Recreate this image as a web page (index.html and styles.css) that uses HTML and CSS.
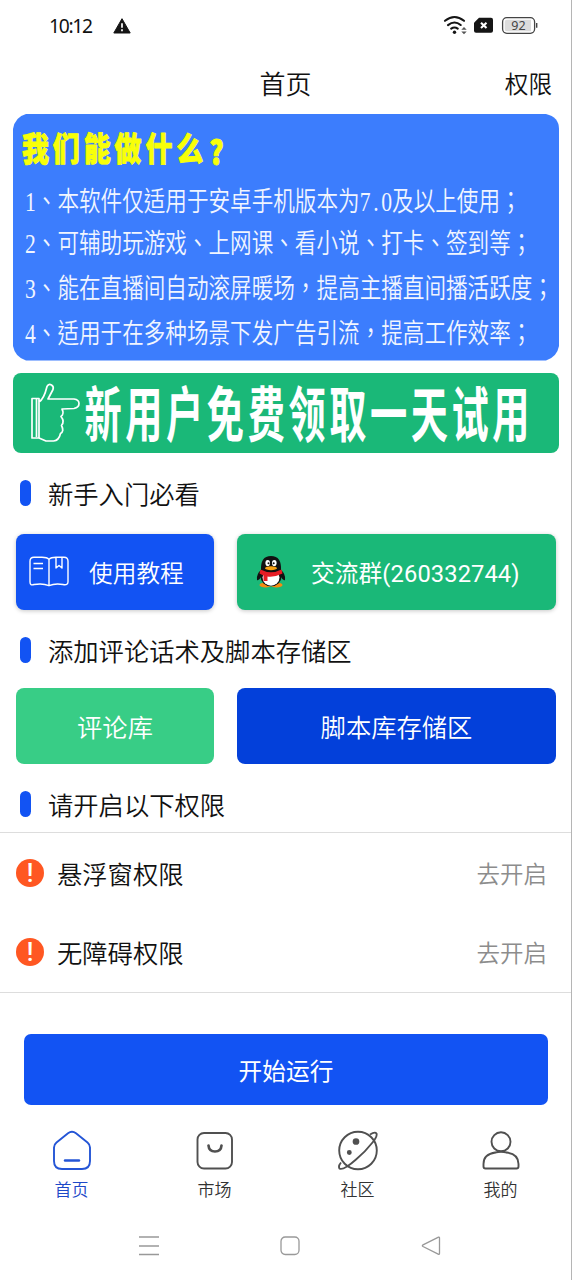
FILE: index.html
```html
<!DOCTYPE html>
<html lang="zh-CN">
<head>
<meta charset="utf-8">
<title>首页</title>
<link rel="stylesheet" href="styles.css">
</head>
<body>
<div class="screen">
  <header class="status">
    <span class="clock">10:12</span>
    <svg class="warn" width="18" height="16" viewBox="0 0 18 16"><path d="M9 .7 17.2 15H.8z" fill="#151515" stroke="#151515" stroke-linejoin="round"/><path d="M9 5.2v4.6M9 11.3v2" stroke="#fff" stroke-width="1.7"/></svg>
    <svg class="signals" width="96" height="22" viewBox="442 14 96 22">
      <g fill="none" stroke="#151515" stroke-width="2.1" stroke-linecap="round"><path d="M445 20.8q9.500-7.600 19 0M448 25.100q6.500-5.200 12.700-.1M451.200 28.700q3.300-2.400 6.500 0"/></g>
      <circle cx="454.500" cy="32.200" r="1.700" fill="#151515"/>
      <path d="M461.300 29.800l2.700-2.800 2.700 2.800zM461.300 31.400h5.400l-2.700 2.800z" fill="#555"/>
      <path d="M479 17.800h12q2 0 2 2v11q0 2-2 2h-15q-2 0-2-2v-8z" fill="#151515"/>
      <path d="M481 22.700l5.500 5.200m0-5.200-5.500 5.200" stroke="#fff" stroke-width="2.1"/>
      <rect x="502.600" y="17.700" width="32" height="15.600" rx="4.200" fill="#fff" stroke="#444" stroke-width="1.300"/>
      <path d="M507 19.700h24v11.600h-24q-2.300 0-2.300-2.300v-7q0-2.300 2.300-2.300z" fill="#dcdcdc"/>
      <path d="M536.700 23v4.700" stroke="#444" stroke-width="1.400"/>
      <text class="battery" x="518.500" y="30.300" text-anchor="middle">92</text>
    </svg>
  </header>

  <div class="titlebar"><span></span><h1>首页</h1><a class="perm-link">权限</a></div>

  <main>
    <svg class="intro" width="546" height="247" viewBox="13 114 546 247">
      <path d="M26 114H546Q559 117 559 129V346Q557 357 546 360.500H26Q15 357 13 346V129Q15 117 26 114z" fill="#3c7dfd"/>
      <text class="intro-title" transform="translate(22 160.500) scale(.9 1.100)">我们能做什么<tspan x="208" y="4">?</tspan></text>
      <g class="intro-lines" lang="zh-TW">
        <text transform="translate(25 211) scale(.8 1)">1、本软件仅适用于安卓手机版本为7<tspan dx="3.400">.</tspan><tspan dx="3.400">0</tspan>及以上使用；</text>
        <text transform="translate(25 252.500) scale(.8 1)">2、可辅助玩游戏、上网课、看小说、打卡、签到等；</text>
        <text transform="translate(25 298) scale(.8 1)">3、能在直播间自动滚屏暖场，提高主播直间播活跃度；</text>
        <text transform="translate(25 342.500) scale(.8 1)">4、适用于在多种场景下发广告引流，提高工作效率；</text>
      </g>
    </svg>

    <svg class="trial" width="546" height="80" viewBox="13 373 546 80">
      <rect x="13" y="373" width="546" height="80" rx="8" fill="#1ab878"/>
      <path d="M32 398.500h7v39.500h-7zM36.500 399v38M39 402q5-3 8-15.500 1.500-3 4.500-1.500 2.500 1.500 1.500 4.500l-5 9.500h26q5 .5 5 4.500t-5 5l-12 .5q2.500 5-1 7.500 4 5 .5 9 3 6-1 8-1.500 7-7 7.500H46l-7-3" fill="none" stroke="#fff" stroke-width="1.700" stroke-linejoin="round"/>
      <text class="trial-text" transform="translate(84.500 436.500) scale(.62 1)">新用户免费领取一天试用</text>
    </svg>

    <h2>新手入门必看</h2>
    <div class="row">
      <button class="btn blue tutorial">
        <svg width="40" height="32" viewBox="0 0 40 32" fill="none" stroke="#fff" stroke-width="1.400" stroke-linejoin="round"><path d="M20 3.500Q18 1.300 13 1.300H5q-4 0-4 4V26q0 4 4 2.500 9-1.500 15 1.200 6-2.700 14-1.200 5 1 5-2.500V5.300q0-4-4-4h-8q-5 0-7 2.200zM20 3.500v26M4.500 7.500H14M4.500 12.500H14M27 1.500v10.500l3-2.500 3 2.500V1.500"/></svg>
        <span>使用教程</span>
      </button>
      <button class="btn green group">
        <svg width="30" height="34" viewBox="0 0 30 34">
          <path d="M6 14Q0 19 1 25q2 1 4-3M24 14q6 5 5 11-2 1-4-3" fill="#111"/>
          <ellipse cx="9.500" cy="30" rx="6" ry="2.400" fill="#f58b12"/><ellipse cx="20.500" cy="30" rx="6" ry="2.400" fill="#f58b12"/>
          <ellipse cx="15" cy="21.500" rx="10.500" ry="9.800" fill="#111"/><ellipse cx="15" cy="22.500" rx="8.500" ry="8.300" fill="#fff"/>
          <path d="M5 16Q4 1 15 1t10 15q-10 6-20 0z" fill="#111"/>
          <ellipse cx="11.700" cy="8" rx="2.300" ry="3.100" fill="#fff"/><ellipse cx="18.300" cy="8" rx="2.300" ry="3.100" fill="#fff"/>
          <circle cx="12.500" cy="8.200" r="1" fill="#111"/><circle cx="17.700" cy="8.200" r="1" fill="#111"/>
          <ellipse cx="15" cy="13.200" rx="6" ry="2" fill="#f9a112"/>
          <path d="M4.500 14.500q10.500 5.500 21 0l1 4q-8 4-15 3v4.500H7.500v-5.500l-4-2z" fill="#e71d25"/>
        </svg>
        <span>交流群(260332744)</span>
      </button>
    </div>

    <h2>添加评论话术及脚本存储区</h2>
    <div class="row">
      <button class="btn mint">评论库</button>
      <button class="btn royal">脚本库存储区</button>
    </div>

    <h2>请开启以下权限</h2>
    <div class="perms">
      <div class="perm"><i>!</i><span class="perm-name">悬浮窗权限</span><a>去开启</a></div>
      <div class="perm"><i>!</i><span class="perm-name">无障碍权限</span><a>去开启</a></div>
    </div>
    <button class="start">开始运行</button>
  </main>

  <nav class="tabs">
    <a class="tab active"><svg viewBox="0 0 42 42"><path d="M17 3.300Q21 .300 25 3.300l11.500 9.200q2.500 2 2.500 5V31q0 8-8 8H11q-8 0-8-8V17.500q0-3 2.500-5z"/><path d="M14 30.500h14" stroke-width="2.400" stroke-linecap="round"/></svg>首页</a>
    <a class="tab"><svg viewBox="0 0 42 42"><rect x="3.500" y="3" width="34.500" height="35.500" rx="6.500"/><path d="M14.500 15.500q.5 6 6.500 6t6.500-6" stroke-width="2.700" stroke-linecap="round"/></svg>市场</a>
    <a class="tab"><svg viewBox="0 0 42 42"><circle cx="21" cy="20.500" r="18.800"/><path d="M33 4.500q5-3 6.500-1 1 3-4 9-7 9-16.500 17Q6 41 2.500 38.500q-1.500-2.500 1.500-6"/><circle cx="19" cy="11.500" r="2.400" fill="#505050"/><circle cx="12.300" cy="22.500" r="1.500" fill="#505050"/></svg>社区</a>
    <a class="tab"><svg viewBox="0 0 42 42"><circle cx="21" cy="11.800" r="9.500"/><path d="M15.500 22.500Q3.500 24 3.500 34v2.500q0 2 2 2h31q2 0 2-2V34q0-10-12-11.500"/><path d="M15 22.700q6-2 12 0"/></svg>我的</a>
  </nav>

  <footer class="system">
    <svg width="20" height="20"><path d="M0 1h20M0 10h20M0 18.500h20"/></svg>
    <svg width="20" height="20"><rect x="1" y="1" width="18" height="17.500" rx="4.200"/></svg>
    <svg width="20" height="20"><path d="M17.500 1.200q1-.4 1 1v15q0 1.600-1.300.9L2 10.500q-1.300-.8 0-1.600z"/></svg>
  </footer>
</div>
</body>
</html>
```
FILE: styles.css
```css
* { box-sizing: border-box; margin: 0; padding: 0; }

body {
  width: 572px;
  font-family: Roboto, "Noto Sans CJK SC", sans-serif;
  font-weight: 350;
  color: #111;
  background: #fff;
}

.screen {
  height: 1280px;
  display: flex;
  flex-direction: column;
  border-right: 1px solid #b5b5b5;
  overflow: hidden;
}

.status {
  height: 50px;
  flex: none;
  display: flex;
  align-items: center;
  padding: 0 34px 0 49px;
}
.clock { font: 400 19.3px "Noto Sans", sans-serif; letter-spacing: -1.3px; width: 64px; }
.warn { margin-top: 2px; }
.signals { margin-left: auto; margin-right: -1px; }
.battery { font: 400 12.5px "Noto Sans", sans-serif; fill: #444; }

.titlebar {
  height: 64px;
  flex: none;
  display: grid;
  grid-template-columns: 1fr auto 1fr;
  align-items: center;
  padding: 6px 19px 0 19px;
}
h1 { font-size: 26px; font-weight: 350; line-height: 38px; }
.perm-link { text-align: right; font-size: 23.6px; line-height: 36px; }

main { display: flex; flex-direction: column; }
.intro { margin-left: 13px; }
.trial { margin: 12px 0 0 13px; overflow: visible; }
.intro-title {
  font: 900 30px "Noto Sans CJK SC", sans-serif;
  letter-spacing: 4.3px;
  fill: #f8ff08;
  stroke: #f8ff08;
  stroke-width: .8px;
  stroke-linejoin: round;
}
.intro-lines { font: 350 27px "Liberation Serif", "Noto Sans CJK TC", serif; fill: #f1f5ff; }
.trial-text { font: 700 60px "Noto Sans CJK SC", sans-serif; letter-spacing: 5.8px; fill: #fff; }

h2 {
  height: 80px;
  display: flex;
  align-items: center;
  gap: 17px;
  padding: 0 0 0 20px;
  font-size: 25.3px;
  font-weight: 350;
}
h2::before { content: ""; width: 11px; height: 26px; border-radius: 5.5px; background: #1253f3; }

.row {
  display: grid;
  grid-template-columns: 198px 319px;
  column-gap: 23px;
  padding-left: 16px;
}
.trial + h2 { height: 81px; padding-bottom: 2px; }
.btn {
  height: 76px;
  border: 0;
  border-radius: 8px;
  font: inherit;
  font-size: 25.3px;
  color: #fff;
}
.row + h2 { height: 78px; padding-top: 1px; }
.blue, .green {
  display: flex;
  align-items: center;
  font-size: 23.7px;
  box-shadow: 0 1px 4px rgba(0, 0, 0, .22);
}
.blue { background: #1253f3; padding-left: 13px; gap: 20px; }
.green { background: #1ab878; padding-left: 19px; gap: 25px; font-weight: 400; }
.green span { letter-spacing: .1px; }
.mint { background: #38cd86; }
.royal { background: #0340da; }

.perms { margin-top: -10px; border-top: 1px solid #ddd; border-bottom: 1px solid #ddd; }
.perm {
  height: 79.5px;
  display: flex;
  align-items: center;
  padding: 0 24px 0 16px;
  font-size: 25.3px;
}
.perm i {
  width: 28px;
  height: 28px;
  margin: 0 14px 0 0;
  border-radius: 50%;
  background: #ff5722;
  color: #fff;
  font: 500 25px/29px Roboto, sans-serif;
  text-align: center;
}
.perm-name { margin-left: -1px; }
.perm a { margin-left: auto; font-size: 23.5px; color: #8c8c8c; }

.start {
  height: 71px;
  margin: 41px 23px 0 24px;
  border: 0;
  border-radius: 7px;
  background: #1253f3;
  color: #fff;
  font: inherit;
  font-size: 23.7px;
  font-weight: 400;
}

.tabs { display: grid; grid-template-columns: repeat(4, 143px); margin-top: 25px; }
.tab {
  display: flex;
  flex-direction: column;
  align-items: center;
  font-size: 17px;
  line-height: 25px;
  gap: 6px;
  color: #333;
}
.tab svg { width: 42px; height: 42px; fill: none; stroke: #505050; stroke-width: 1.9; }
.active { color: #1d49c8; }
.active svg { stroke: #2455d6; }

.system { display: flex; gap: 121px; padding-left: 139px; margin-top: 33px; }
.system svg { fill: none; stroke: #999; stroke-width: 1.3; }
```
